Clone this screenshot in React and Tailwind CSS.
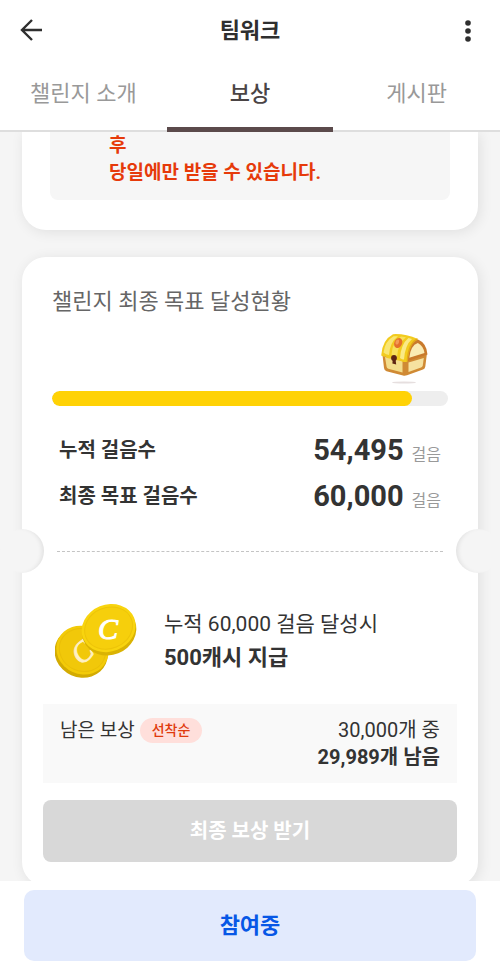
import { clsx } from "clsx";

const tabs = [
  { id: "intro", label: "챌린지 소개" },
  { id: "reward", label: "보상" },
  { id: "board", label: "게시판" },
];

const steps = [
  { label: "누적 걸음수", value: 54495 },
  { label: "최종 목표 걸음수", value: 60000 },
];

const BackIcon = () => (
  <svg viewBox="0 0 24 24" className="w-6 h-6" fill="none" stroke="#2f2f2f" strokeWidth="2.4" aria-hidden="true">
    <path d="M22 12H2.500M12 2 2 12l10 10" />
  </svg>
);

const MoreIcon = () => (
  <svg viewBox="0 0 24 24" className="w-6 h-6" fill="#2f2f2f" aria-hidden="true">
    <circle cx="12" cy="5" r="2.8" />
    <circle cx="12" cy="13" r="2.8" />
    <circle cx="12" cy="21" r="2.8" />
  </svg>
);

const Chest = () => (
  <svg viewBox="0 0 48 52" className="w-12 h-[52px]" aria-hidden="true">
    <ellipse cx="24" cy="49.500" rx="12" ry="1" fill="#e6dfdf" />
    {/* body */}
    <path d="M2.500 22 4 35Q4.300 37.500 6.500 38.200L23 42.500Q25 43 27 42.200L43 36.500Q45 35.800 45.300 33.500L47 20 26 24Z" fill="#d08a34" />
    <path d="M5 24 22.500 28V39.500L8.300 35.800Q6.800 35.300 6.600 33.800Z" fill="#f3dd8c" />
    <path d="M28.500 29.500 43.800 25 42.800 32.300Q42.500 34 41 34.600L28.500 39Z" fill="#f6e2a0" />
    {/* end panel of the lid */}
    <path d="M26 28Q27 9 38 6.500Q46.500 10 47.500 21.500L26.500 28.500Z" fill="#c97a2c" />
    <path d="M29.300 24.800Q30.500 12.500 37.800 10Q43.500 13 44.500 20Z" fill="#faebb4" />
    {/* lid */}
    <path d="M1.200 22.500Q2 7 13 1.200Q25 .5 38 6Q29 9.500 27.500 28.500Q24 30 20 27.500Q16 28 13 24.500Q8 27 5.500 23.500Q3 24 1.200 22.500Z" fill="#f2cb1e" />
    <path d="M3.500 19.500Q5 8 13.500 3.200L18 3.300Q10 9 9 22Q6 21.500 3.500 19.500Z" fill="#f9e673" />
    <path d="M11.500 21.500Q12.500 8 21 3.500L26 4.300Q18 10 17 24.500Q13.500 24 11.500 21.500Z" fill="#f8e05a" />
    <path d="M20 25Q21 11 28.500 5L32 6Q25 12 24 26.500Q22 26.500 20 25Z" fill="#faea86" />
    <path d="M37.500 6Q28.500 10 27.300 28" fill="none" stroke="#e3a818" strokeWidth="1.400" />
    <ellipse cx="18.200" cy="10" rx="3.900" ry="5.300" fill="#e5702a" transform="rotate(24 18.200 10)" />
    <ellipse cx="17.300" cy="9" rx="1.700" ry="2.600" fill="#f39b56" transform="rotate(24 17.300 9)" />
    {/* keyhole */}
    <circle cx="14" cy="25" r="2.900" fill="#5d2413" />
    <path d="M12.800 26h2.700l.7 5.500-3.800-1Z" fill="#5d2413" />
  </svg>
);

const Coins = () => (
  <svg viewBox="0 0 82 76" className="w-[82px] h-[76px] shrink-0" aria-hidden="true">
    <g transform="rotate(24 27 48)">
      <ellipse cx="27" cy="50" rx="27" ry="24.500" fill="#d3ab02" />
      <ellipse cx="27" cy="47" rx="26.500" ry="24" fill="#f3cb08" />
      <ellipse cx="27" cy="47" rx="23.500" ry="21" fill="#f1c80a" stroke="#eabf08" strokeWidth="1" />
    </g>
    <text x="27" y="59" fill="#fff0c4" stroke="#fff0c4" strokeWidth=".8" fontSize="29" fontFamily="Liberation Serif, serif" fontStyle="italic" textAnchor="middle" transform="rotate(-42 27 49)">C</text>
    <g transform="rotate(-22 54 26)">
      <ellipse cx="53.500" cy="28" rx="27.500" ry="24" fill="#dab303" />
      <ellipse cx="54" cy="25" rx="27.500" ry="23.500" fill="#f8d40e" />
      <ellipse cx="54" cy="25" rx="24.500" ry="20.500" fill="#f6cf0c" stroke="#edc409" strokeWidth="1" />
    </g>
    <text x="53" y="36" fill="#ffffff" stroke="#ffffff" strokeWidth="1" fontSize="30" fontFamily="Liberation Serif, serif" fontStyle="italic" textAnchor="middle">C</text>
  </svg>
);

const Header = () => (
  <header className="relative z-10 bg-white border-b-2 border-[#dedede]">
    <div className="flex items-center justify-between h-[60px] px-5">
      <button type="button" aria-label="뒤로" className="w-6"><BackIcon /></button>
      <h1 className="text-[22px] font-bold text-[#2f2f2f]">팀워크</h1>
      <button type="button" aria-label="더보기" className="w-6"><MoreIcon /></button>
    </div>
    <div role="tablist" className="grid grid-cols-3 -mb-0.5">
      {tabs.map(({ id, label }) => (
        <button
          key={id}
          type="button"
          role="tab"
          aria-selected={id === "reward"}
          className={clsx(
            "h-[72px] pt-1 pb-1 text-[22px] border-b-[5px]",
            id === "reward" ? "font-medium text-[#4a4445] border-[#5b4a4b]" : "text-[#999999] border-transparent"
          )}
        >
          {label}
        </button>
      ))}
    </div>
  </header>
);

const Notch = ({ className }) => (
  <span className={clsx("w-11 h-11 shrink-0 rounded-full bg-[#f5f5f5]", className)} />
);

const GoalCard = () => {
  const percent = (steps[0].value / steps[1].value) * 100;

  return (
    <section className="bg-white rounded-3xl shadow-[2px_2px_14px_rgba(0,0,0,0.09)] pt-7 pb-6">
      <div className="px-[30px]">
        <h2 className="text-[22px] leading-[34px] text-[#666666]">챌린지 최종 목표 달성현황</h2>
        <div className="flex justify-end pr-5 mt-3.5">
          <Chest />
        </div>
        <div
          role="progressbar"
          aria-label="달성률"
          aria-valuenow={Math.round(percent)}
          className="mt-1.5 h-[15px] rounded-full bg-[#eeeeee] overflow-hidden"
        >
          <div className="h-full rounded-full bg-[#ffd205]" style={{ width: `${percent}%` }} />
        </div>
        <dl className="mt-[21px] px-[7px]">
          {steps.map(({ label, value }) => (
            <div key={label} className="flex items-center justify-between h-[46px]">
              <dt className="text-xl font-bold text-[#333333]">{label}</dt>
              <dd className="flex items-baseline gap-2 text-base text-[#999999]">
                <strong className="text-[29px] leading-10 font-bold text-[#333333]">{value.toLocaleString("en-US")}</strong>
                걸음
              </dd>
            </div>
          ))}
        </dl>
      </div>

      <div className="flex items-center mt-2.5">
        <Notch className="-ml-[22px] shadow-[inset_-4px_0_4px_-2px_rgba(0,0,0,0.08)]" />
        <hr className="flex-1 mx-[13px] border-t border-dashed border-[#c4c4c4]" />
        <Notch className="-mr-[22px] shadow-[inset_4px_0_4px_-2px_rgba(0,0,0,0.08)]" />
      </div>

      <div className="px-[21px]">
        <div className="flex items-center gap-[27px] mt-[30px] pl-3">
          <Coins />
          <div className="leading-[34px] text-[#333333]">
            <p className="text-[21px]">누적 60,000 걸음 달성시</p>
            <p className="text-[22px] font-bold">500캐시 지급</p>
          </div>
        </div>

        <div className="flex items-start justify-between mt-[25px] px-[17px] pt-[13px] pb-3 bg-[#f9f9f9] text-[#333333] leading-[27px]">
          <div className="flex items-center gap-[5px] text-[19px]">
            남은 보상
            <span className="px-3 rounded-full bg-[#ffdfdb] text-sm leading-[25px] font-medium text-[#e03a0c]">선착순</span>
          </div>
          <div className="text-right text-xl leading-[27px]">
            <p>30,000개 중</p>
            <p className="font-bold">29,989개 남음</p>
          </div>
        </div>

        <button type="button" disabled className="w-full h-[62px] mt-[17px] rounded-lg bg-[#d8d8d8] text-xl font-bold text-white">
          최종 보상 받기
        </button>
      </div>
    </section>
  );
};

export default function App() {
  return (
    <div className="flex flex-col h-screen bg-white font-[Roboto,'Noto_Sans_CJK_KR',sans-serif]">
      <Header />
      <main className="flex-1 min-h-0 overflow-x-hidden overflow-y-auto [scrollbar-width:none] bg-[#f5f5f5] px-[22px]">
        <section className="bg-white rounded-b-3xl shadow-[2px_2px_14px_rgba(0,0,0,0.09)] px-7 pb-[30px] mb-[27px]">
          <p className="pl-[59px] pb-3.5 rounded-b-lg bg-[#f6f6f6] text-[19px] leading-[27px] font-bold text-[#e63a0a]">
            후
            <br />
            당일에만 받을 수 있습니다.
          </p>
        </section>
        <GoalCard />
      </main>
      <footer className="relative z-10 bg-white px-6 pt-[9px] pb-1.5">
        <button type="button" className="w-full h-[71px] rounded-[10px] bg-[#e2eafd] text-[22px] font-bold text-[#0757e6]">
          참여중
        </button>
      </footer>
    </div>
  );
}
